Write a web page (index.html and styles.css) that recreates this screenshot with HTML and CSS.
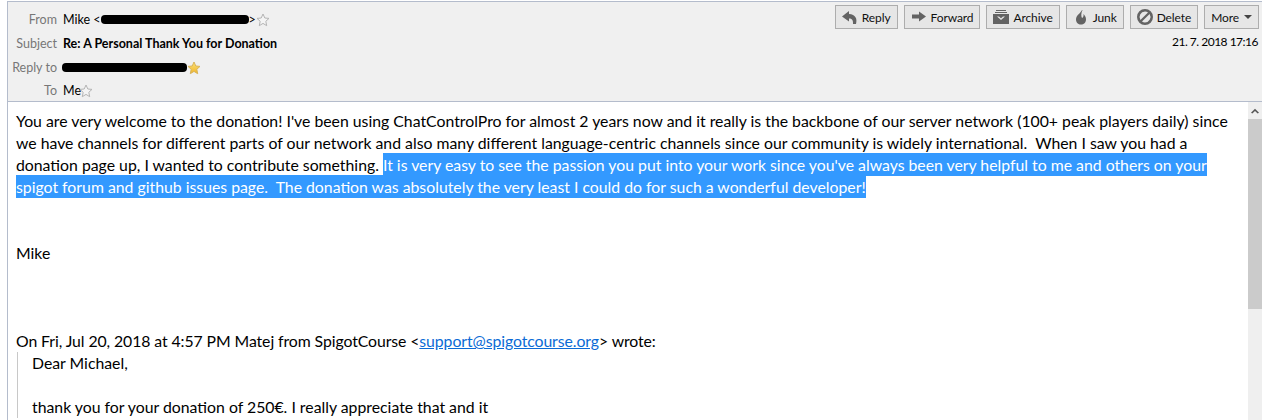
FILE: index.html
```html
<!DOCTYPE html>
<html lang="en">
<head>
<meta charset="UTF-8" />
<title>Re: A Personal Thank You for Donation</title>
<link rel="stylesheet" href="styles.css">
</head>
<body>
  <svg class="defs" width="0" height="0">
    <defs>
      <path id="star" d="M7 1 8.800 5 13 5.400 9.800 8.300 10.700 12.700 7 10.400 3.300 12.700 4.200 8.300 1 5.400 5.200 5z" />
      <linearGradient id="gold" x1="0" y1="0" x2="0" y2="1"><stop offset="0" stop-color="#fbe27a" /><stop offset="1" stop-color="#f0b429" /></linearGradient>
    </defs>
  </svg>
  <main class="message">
    <header class="head">
      <div class="fields">
        <div class="field field-from"><span class="label">From</span><span class="value">Mike &lt;</span><span class="redact redact-from"></span><span class="value">&gt;</span><svg class="star" viewBox="0 0 14 14"><use href="#star" /></svg></div>
        <div class="field"><span class="label">Subject</span><span class="value subject">Re: A Personal Thank You for Donation</span></div>
        <div class="field field-reply"><span class="label">Reply to</span><span class="redact redact-reply"></span><svg class="star gold" viewBox="0 0 14 14"><use href="#star" /></svg></div>
        <div class="field field-to"><span class="label">To</span><span class="value">Me</span><svg class="star star-me" viewBox="0 0 14 14"><use href="#star" /></svg></div>
      </div>
      <div class="side">
        <div class="actions">
          <button class="btn btn-reply"><svg viewBox="0 0 16 16"><path d="M7 2 0 7.500 7 12.500V9.500c3 0 4.200 1.500 4 5.500h3c1.500-5.500-.5-9.500-7-10z" /></svg>Reply</button>
          <button class="btn btn-forward"><svg viewBox="0 0 16 16"><path d="M1 5.500h7V2.500l7 5-7 5V9.500H1z" /></svg>Forward</button>
          <button class="btn btn-archive"><svg viewBox="0 0 16 16"><path d="M3 1h10v1H3zM2 3h12v1H2zM0 5h16v10H0zm4 2.500 4 3.500 4-3.500h-2L8 9.200 6 7.500z" fill-rule="evenodd" /></svg>Archive</button>
          <button class="btn btn-junk"><svg viewBox="0 0 16 16"><path d="M9 1C8 4 3 6 3 10.500 3 13.500 5.200 15.500 8 15.500s5-2 5-5c0-2.500-1-4-2.500-5.500.3 2-.2 3.500-1.500 4-1-1.500-1-5 .5-8z" /></svg>Junk</button>
          <button class="btn btn-delete"><svg viewBox="0 0 16 16"><path d="M8 0a8 8 0 1 0 0 16A8 8 0 0 0 8 0zm0 2.500c1.100 0 2.200.3 3 .9L3.400 11a5.500 5.500 0 0 1 4.600-8.500zm0 11c-1.100 0-2.200-.3-3-.9L12.600 5A5.500 5.500 0 0 1 8 13.500z" fill-rule="evenodd" /></svg>Delete</button>
          <button class="btn btn-more">More<span class="caret"></span></button>
        </div>
        <div class="date">21. 7. 2018 17:16</div>
      </div>
    </header>
    <div class="content">
      <article class="text">
        <p class="lead">You are very welcome to the donation! I've been using ChatControlPro for almost 2 years now and it really is the backbone of our server network (100+ peak players daily) since we have channels for different parts of our network and also many different language-centric channels since our community is widely international.&nbsp; When I saw you had a donation page up, I wanted to contribute something. <span class="picked">It is very easy to see the passion you put into your work since you've always been very helpful to me and others on your spigot forum and github issues page.&nbsp; The donation was absolutely the very least I could do for such a wonderful developer!</span></p>
        <p class="sign">Mike</p>
        <p class="attrib">On Fri, Jul 20, 2018 at 4:57 PM Matej from SpigotCourse &lt;<a href="#">support@spigotcourse.org</a>&gt; wrote:</p>
        <blockquote class="quote">
          <p>Dear Michael,</p>
          <p class="gap">thank you for your donation of 250€. I really appreciate that and it</p>
        </blockquote>
      </article>
      <div class="scrollbar">
        <div class="arrow"><svg viewBox="0 0 9 6"><path d="M0 5 4.500 .5 9 5 7.500 5.800 4.500 3 1.500 5.800z" /></svg></div>
        <div class="thumb"></div>
      </div>
    </div>
  </main>
</body>
</html>
```

FILE: styles.css
```css
html, body {
  margin: 0;
  padding: 0;
  height: 420px;
  overflow: hidden;
  background: white;
}
body {
  font-family: Lato, "Open Sans", sans-serif;
  color: #000;
}
.defs {
  display: block;
}
.message {
  height: 419px;
  margin: 1px 0 0 7px;
  border-left: 1px solid #b4bccc;
  display: flex;
  flex-direction: column;
}
.head {
  height: 99px;
  flex: none;
  background: #f0f0f0;
  border-top: 1px solid #b4bccc;
  border-bottom: 1px solid #b4bccc;
  display: flex;
  justify-content: space-between;
}
.fields {
  padding-top: 6px;
  display: flex;
  flex-direction: column;
}
.field {
  height: 24px;
  display: flex;
  align-items: center;
  font-size: 12.5px;
}
.field-from {
  height: 23px;
}
.field-reply {
  height: 25px;
}
.field-to {
  height: 21px;
}
.label {
  width: 49px;
  margin-right: 6px;
  text-align: right;
  color: #777;
}
.subject {
  font-weight: 700;
}
.redact {
  display: inline-block;
  height: 9px;
  background: black;
  border-radius: 4px;
}
.redact-from {
  width: 148px;
}
.redact-reply {
  width: 125px;
  margin-left: -1px;
}
.star {
  width: 14px;
  height: 14px;
  fill: #f4f4f4;
  stroke: #b4b4b4;
  stroke-width: 1;
}
.star.gold {
  fill: url(#gold);
  stroke: #d8b45a;
}
.star-me {
  margin-left: -2px;
}
.side {
  padding: 3px 3px 0 0;
  display: flex;
  flex-direction: column;
  align-items: flex-end;
}
.actions {
  display: flex;
  gap: 6px;
}
.btn {
  height: 24px;
  padding: 0 6px;
  display: flex;
  align-items: center;
  gap: 4px;
  font: 12px Lato, sans-serif;
  letter-spacing: -0.1px;
  color: #111;
  background: #e6e6e6;
  border: 1px solid #adadad;
}
.btn svg {
  width: 16px;
  height: 16px;
  fill: #636363;
}
.caret {
  width: 0;
  height: 0;
  margin-left: 1px;
  border-left: 4px solid transparent;
  border-right: 4px solid transparent;
  border-top: 4px solid #444;
}
.date {
  margin-top: 5px;
  padding-right: 1px;
  font-size: 12px;
  letter-spacing: -0.5px;
}
.content {
  flex: 1;
  display: flex;
  min-height: 0;
}
.text {
  flex: 1;
  padding: 8px 16px 0 8px;
  font-size: 15.8px;
  line-height: 22px;
  overflow: hidden;
}
.text p {
  margin: 0;
}
.picked {
  padding: 2px 0;
  background: #3399ff;
  color: white;
}
.text .sign {
  padding-top: 44px;
}
.text .attrib {
  padding-top: 66px;
  letter-spacing: -0.08px;
}
.attrib a {
  color: #0b6bd6;
}
.quote {
  margin: 0 0 0 1px;
  padding-left: 14px;
  border-left: 1px solid #c8c8c8;
}
.text .gap {
  padding-top: 22px;
}
.scrollbar {
  width: 14px;
  background: #efefef;
  flex: none;
}
.arrow {
  height: 17px;
  display: flex;
  align-items: center;
  justify-content: center;
}
.arrow svg {
  width: 8px;
  height: 6px;
  fill: #555;
}
.thumb {
  height: 190px;
  background: #cbcbcb;
}
```
